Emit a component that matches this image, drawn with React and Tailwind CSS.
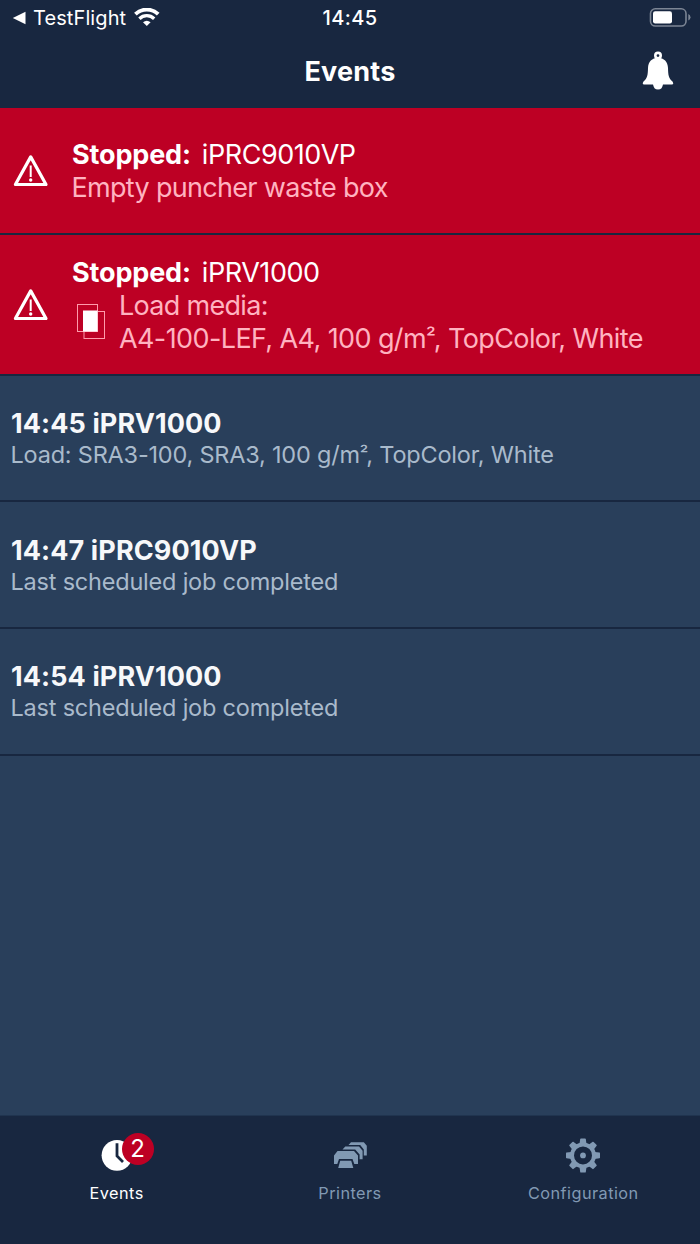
import React from "react";

function WarningIcon() {
  return (
    <svg className="h-9 w-9 shrink-0" viewBox="0 0 36 36" fill="none" stroke="#fff">
      <path d="M17.7 3.9 L33 31.5 H2.4 Z" strokeWidth="3.2" strokeLinejoin="round" />
      <path d="M17.7 12.5 V24" strokeWidth="2" />
      <circle cx="17.7" cy="27" r="1.7" fill="#fff" stroke="none" />
    </svg>
  );
}

function MediaIcon() {
  return (
    <svg className="h-9 w-7 shrink-0" viewBox="0 0 28 36" fill="none">
      <rect x="0.5" y="0.5" width="20" height="27" stroke="#ff9aab" />
      <rect x="7" y="7.5" width="20.5" height="27" stroke="#ff9aab" />
      <rect x="6" y="6.5" width="14.5" height="21" fill="#fff" />
    </svg>
  );
}

function SquareMetre() {
  return (
    <>
      g/m<span className="text-[0.82em] leading-none tracking-[-2px] align-[0.12em]">²</span>
    </>
  );
}

function Alert({ height, printer, children }) {
  return (
    <section className={`flex shrink-0 items-center border-b-2 border-[#182740] bg-[#bd0024] pl-[13px] ${height}`}>
      <WarningIcon />
      <div className="ml-[23px] pt-[1.5px] text-[27px] leading-[33px] whitespace-nowrap">
        <p className="text-white">
          <b className="font-bold tracking-[-0.15px]">Stopped:</b>
          <span className="ml-[11px] tracking-[-0.45px]">{printer}</span>
        </p>
        {children}
      </div>
    </section>
  );
}

function Event({ title, detail, tracking }) {
  return (
    <section className="h-[126.7px] shrink-0 border-b-2 border-[#182740] pt-[31.3px] pl-[11px] whitespace-nowrap">
      <h2 className="text-[27px] leading-[33px] font-bold tracking-[0.1px] text-[#f7f8fa]">{title}</h2>
      <p className={`-ml-[0.5px] text-[23.5px] leading-[30px] text-[#a9bacb] ${tracking}`}>{detail}</p>
    </section>
  );
}

function ClockIcon() {
  return (
    <svg className="h-9 w-9" viewBox="0 0 36 36">
      <circle cx="18" cy="18.3" r="15.4" fill="#fff" />
      <path d="M18 6.3 V19 L24 25" fill="none" stroke="#182740" strokeWidth="2.8" />
    </svg>
  );
}

function PrintersIcon() {
  return (
    <svg className="h-9 w-9" viewBox="0 0 36 36" fill="#8199b3">
      <path d="M16.5 8 L19 5.2 H31.8 L34.8 8.7 V18.5 H31.8 V12.4 L28.2 8 Z" />
      <path d="M10.5 12.6 L13.3 9.6 H27 L30.6 13.8 V22.3 H27.6 V17.4 L23.2 12.6 Z" />
      <path d="M5.5 14 H22 L26 18.5 V27 H22.3 L20.5 22 H7 L5.3 27 H2 V18.5 Z" />
      <path d="M8.2 23.7 H19.2 L21.3 31 H6.2 Z" />
    </svg>
  );
}

const teeth = [0, 45, 90, 135, 180, 225, 270, 315];

function GearIcon() {
  return (
    <svg className="h-9 w-9" viewBox="0 0 36 36">
      <g transform="translate(0 0.4)" fill="#8199b3">
        <circle cx="18" cy="18" r="11" fill="none" stroke="#8199b3" strokeWidth="4" />
        {teeth.map((a) => (
          <path key={a} d="M14.5 6.5 L15.2 1.5 Q15.3 1 16 1 H20 Q20.7 1 20.8 1.5 L21.5 6.5 Z" transform={`rotate(${a} 18 18)`} />
        ))}
        <circle cx="18" cy="18" r="2.9" />
      </g>
    </svg>
  );
}

function Tab({ icon, label, color, badge }) {
  return (
    <div className={`flex flex-1 flex-col items-center pt-[21px] ${color}`}>
      <div className="relative h-9 w-9">
        {icon}
        {badge && (
          <span className="absolute -top-[4.5px] left-[23px] flex h-8 w-8 items-center justify-center rounded-full bg-[#bd0024] text-[24px] text-white">
            {badge}
          </span>
        )}
      </div>
      <span className="mt-[10px] text-[16.3px] leading-[20px] tracking-[0.45px]">{label}</span>
    </div>
  );
}

export default function App() {
  return (
    <main className="flex h-[1244px] w-[700px] flex-col overflow-hidden bg-[#293f5b] font-['Inter',sans-serif]">
      <header className="h-[108px] shrink-0 bg-[#182740] text-white">
        <div className="grid h-9 grid-cols-3 items-center text-[20px] leading-9">
          <div className="flex items-center pl-3">
            <svg className="h-3.5 w-3.5" viewBox="0 0 14 14" fill="#fff">
              <path d="M0.8 7 L13.5 0.8 V13.2 Z" />
            </svg>
            <span className="ml-[7px] tracking-[0.1px]">TestFlight</span>
            <svg className="ml-2 h-5 w-[26px]" viewBox="0 0 26 20" fill="none" stroke="#fff">
              <path d="M1.4 6.2 A16.3 16.3 0 0 1 24.2 6.2" strokeWidth="3.8" />
              <path d="M5.4 10.7 A10.6 10.6 0 0 1 20.2 10.7" strokeWidth="3.3" />
              <path d="M9 14.2 Q12.8 11.2 16.6 14.2 L12.8 18 Z" fill="#fff" stroke="none" />
            </svg>
          </div>
          <span className="text-center font-medium tracking-[0.4px]">14:45</span>
          <div className="flex justify-end pr-[9px]">
            <svg className="h-5 w-[42px]" viewBox="0 0 42 20" fill="none">
              <rect x="1.5" y="0.8" width="35.5" height="17.2" rx="4.8" stroke="#7c8594" strokeWidth="1.6" />
              <rect x="4" y="3.3" width="19" height="12.2" rx="2.2" fill="#fff" />
              <path d="M39.3 6 Q41.5 7 41.5 9.2 T39.3 12.4 Z" fill="#7c8594" />
            </svg>
          </div>
        </div>
        <div className="grid h-[72px] grid-cols-3 items-center">
          <span />
          <h1 className="text-center text-[27px] leading-[70px] font-bold tracking-[0.2px]">Events</h1>
          <svg className="mr-[25px] mb-1 h-10 w-[34px] justify-self-end" viewBox="0 0 34 40">
            <circle cx="17" cy="5.6" r="2.7" fill="none" stroke="#fff" strokeWidth="2.6" />
            <path d="M17 7.8 C23 7.8 26.8 12 27 18 C27.2 25 27.5 28 31.5 31.5 Q33.2 34.5 31 34.5 H3 Q0.8 34.5 2.5 31.5 C6.5 28 6.8 25 7 18 C7.2 12 11 7.8 17 7.8 Z" fill="#fff" />
            <path d="M12 34 H22 Q21.5 39.5 17 39.5 T12 34 Z" fill="#fff" />
          </svg>
        </div>
      </header>

      <Alert height="h-[127.4px]" printer="iPRC9010VP">
        <p className="-ml-[0.5px] tracking-[-0.69px] text-[#ffb3c0]">Empty puncher waste box</p>
      </Alert>
      <Alert height="h-[140.3px]" printer="iPRV1000">
        <div className="flex items-center text-[#ffb3c0]">
          <span className="ml-[5px] flex">
            <MediaIcon />
          </span>
          <div className="ml-[14px] tracking-[-0.6px]">
            <p className="tracking-[-0.7px]">Load media:</p>
            <p>
              A4-100-LEF, A4, 100 <SquareMetre />, TopColor, White
            </p>
          </div>
        </div>
      </Alert>

      <Event
        title="14:45 iPRV1000"
        tracking="tracking-[-0.21px]"
        detail={
          <>
            Load: SRA3-100, SRA3, 100 <SquareMetre />, TopColor, White
          </>
        }
      />
      <Event title="14:47 iPRC9010VP" detail="Last scheduled job completed" tracking="tracking-[-0.21px]" />
      <Event title="14:54 iPRV1000" detail="Last scheduled job completed" tracking="tracking-[-0.21px]" />

      <nav className="mt-auto flex h-[129px] shrink-0 border-t border-[#20344f] bg-[#182740]">
        <Tab icon={<ClockIcon />} label="Events" color="text-white" badge="2" />
        <Tab icon={<PrintersIcon />} label="Printers" color="text-[#8199b3]" />
        <Tab icon={<GearIcon />} label="Configuration" color="text-[#8199b3]" />
      </nav>
    </main>
  );
}
